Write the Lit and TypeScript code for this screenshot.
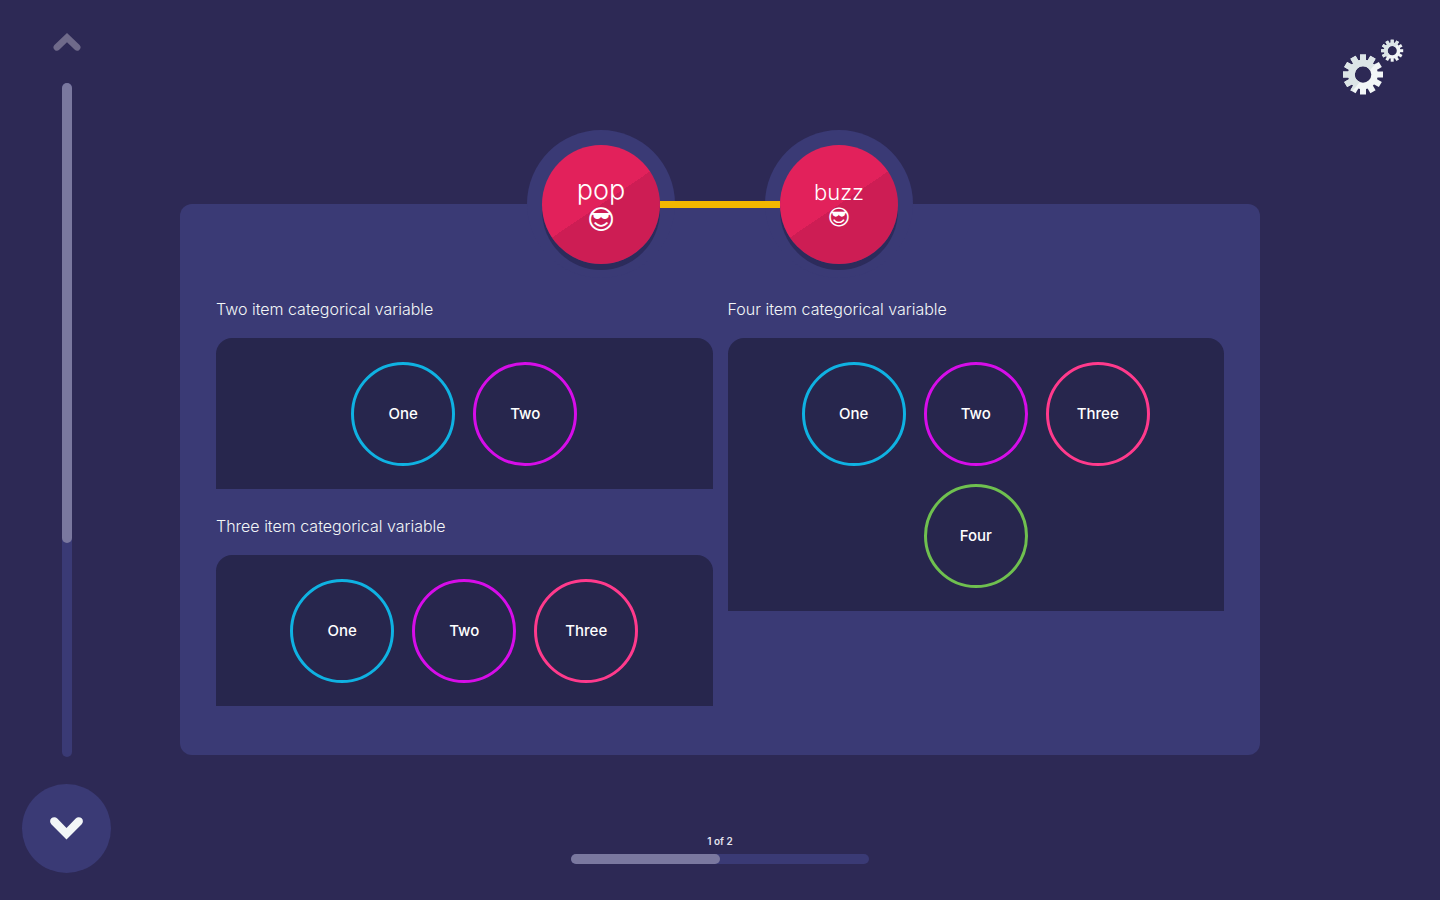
import { LitElement, html, css, svg } from "lit";
import { customElement, property, state } from "lit/decorators.js";

interface Person { name: string; size: string; }
interface Variable { id: string; label: string; options: string[]; }

const PEOPLE: Person[] = [
  { name: "pop", size: "large" },
  { name: "buzz", size: "medium" },
];

const LEFT: Variable[] = [
  { id: "two", label: "Two item categorical variable", options: ["One", "Two"] },
  { id: "three", label: "Three item categorical variable", options: ["One", "Two", "Three"] },
];

const RIGHT: Variable[] = [
  { id: "four", label: "Four item categorical variable", options: ["One", "Two", "Three", "Four"] },
];

const gear = (cx: number, cy: number, r: number, tooth: number, hole: number) => {
  const body = r * 0.74;
  const teeth = Array.from({ length: 12 }, (_, i) => i * 30);
  return svg`
    <path fill-rule="evenodd" d="M${cx - body} ${cy}a${body} ${body} 0 1 0 ${2 * body} 0a${body} ${body} 0 1 0 ${-2 * body} 0z
      M${cx - hole} ${cy}a${hole} ${hole} 0 1 1 ${2 * hole} 0a${hole} ${hole} 0 1 1 ${-2 * hole} 0z"/>
    ${teeth.map((a) => svg`<path transform="rotate(${a} ${cx} ${cy})"
      d="M${cx - tooth / 2} ${cy - r}h${tooth}v${r * 0.32}h${-tooth}z"/>`)}`;
};

@customElement("category-bin")
export class CategoryBin extends LitElement {
  @property({ attribute: false }) variable!: Variable;

  static styles = css`
    :host { display: block; }
    .group { margin: 0; padding: 0; border: 0; min-width: 0; }
    .title {
      display: block; padding: 0; margin-bottom: 20px;
      font-size: 16px; line-height: 18px; font-weight: 300; color: #f2f6f7;
    }
    .options {
      display: flex; flex-wrap: wrap; justify-content: center; gap: 18px;
      padding: 24px 60px 23px; border-radius: 16px 16px 0 0; background: #27264d;
    }
    .option {
      box-sizing: border-box; width: 104px; height: 104px; border-radius: 50%;
      border: 3px solid var(--ring); display: grid; place-items: center;
      font-size: 15px; line-height: 20px; font-weight: 500; color: #fff; cursor: pointer;
    }
    .option:has(.box:checked) { background: var(--ring); }
    .option:has(.box:focus-visible) { outline: 2px solid #fff; outline-offset: 2px; }
    .box { appearance: none; position: absolute; margin: 0; width: 1px; height: 1px; opacity: 0; }
    .c0 { --ring: #0fb2e2; }
    .c1 { --ring: #d60de9; }
    .c2 { --ring: #ff3a8c; }
    .c3 { --ring: #6fc04f; }
  `;

  render() {
    const v = this.variable;
    return html`<fieldset class="group">
      <legend class="title">${v.label}</legend>
      <div class="options">
        ${v.options.map((o, i) => html`<label class="option c${i}">
          <input class="box" type="checkbox" name=${v.id} value=${o} /><span>${o}</span>
        </label>`)}
      </div>
    </fieldset>`;
  }
}

@customElement("app-root")
export class AppRoot extends LitElement {
  @state() private progress = 460 / 674;

  static styles = css`
    :host {
      display: grid; grid-template-columns: 1fr 6fr 1fr; box-sizing: border-box;
      min-height: 100vh; background: #2d2955; color: #fff;
      font-family: Inter, "Open Sans", sans-serif;
    }
    button { padding: 0; border: 0; background: none; cursor: pointer; }
    svg { display: block; }
    .rail {
      box-sizing: border-box; width: 133px; padding: 33px 0 27px;
      display: flex; flex-direction: column; align-items: center;
    }
    .up { margin-bottom: 32px; }
    .track { flex: 1; width: 10px; border-radius: 5px; background: #3a3a75; }
    .fill { border-radius: 5px; background: #7a789f; }
    .down {
      width: 89px; height: 89px; margin-top: 27px; border-radius: 50%;
      background: #3a3a75; display: grid; place-items: center;
    }
    .stage { display: flex; flex-direction: column; padding: 130px 0 36px; }
    .people {
      position: relative; display: flex; justify-content: center; gap: 90px;
      margin-bottom: -74px;
    }
    .halo {
      position: relative; box-sizing: border-box; width: 148px; height: 148px; padding: 15px;
      border-radius: 50%; background: #3a3a75;
    }
    .halo + .halo::before {
      content: ""; position: absolute; right: 133px; top: 71px;
      width: 120px; height: 7px; background: #f2b700;
    }
    .person {
      width: 118px; height: 119px; border-radius: 50%;
      background: linear-gradient(146deg, #e2215b 50%, #cd1d54 50%);
      box-shadow: 0 6px 0 #2c2b5b;
      display: flex; flex-direction: column; align-items: center; justify-content: center;
      font-weight: 300; text-align: center;
    }
    .large { font-size: 27px; line-height: 30px; }
    .medium { font-size: 22px; line-height: 26px; }
    .face { font-family: "DejaVu Sans", sans-serif; font-weight: 400; }
    .panel {
      display: grid; grid-template-columns: 1fr 1fr; gap: 15px; align-items: start;
      padding: 96px 36px 49px; border-radius: 12px; background: #3a3a75;
    }
    .column { display: grid; gap: 28px; }
    .pager {
      margin-top: auto; display: flex; flex-direction: column; align-items: center; gap: 7px;
      font-size: 10px; line-height: 12px; font-weight: 600; color: #e4e4ee;
    }
    .meter { width: 298px; height: 10px; border-radius: 5px; background: #3a3a75; }
    .done { width: 50%; height: 100%; border-radius: 5px; background: #7a789f; }
    .corner { display: flex; justify-content: flex-end; align-items: flex-start; padding: 39px 36px 0 0; }
  `;

  render() {
    return html`
      <nav class="rail" aria-label="Stages">
        <button class="up" aria-label="Previous">
          <svg width="28" height="18" viewBox="0 0 28 18" fill="#6f6a8a">
            <path d="M14 0 L26.6 12 A3.4 3.4 0 0 1 21.8 16.8 L14 9.2 L6.2 16.8 A3.4 3.4 0 0 1 1.4 12Z"/>
          </svg>
        </button>
        <div class="track"><div class="fill" style="height:${this.progress * 100}%"></div></div>
        <button class="down" aria-label="Next">
          <svg width="33" height="23" viewBox="0 0 33 23" fill="#f2f6f7">
            <path d="M16.5 22.5 L1.3 7.3 A4.2 4.2 0 0 1 7.3 1.4 L16.5 11 L25.7 1.4 A4.2 4.2 0 0 1 31.7 7.3Z"/>
          </svg>
        </button>
      </nav>
      <main class="stage">
        <div class="people">
          ${PEOPLE.map((p) => html`<div class="halo"><div class="person ${p.size}">
            <span>${p.name}</span><span class="face">😎&#xFE0E;</span>
          </div></div>`)}
        </div>
        <form class="panel">
          <div class="column">${LEFT.map((v) => html`<category-bin .variable=${v}></category-bin>`)}</div>
          <div class="column">${RIGHT.map((v) => html`<category-bin .variable=${v}></category-bin>`)}</div>
        </form>
        <div class="pager">
          <span>1 of 2</span>
          <div class="meter" role="progressbar" aria-label="Prompt" aria-valuemin="0" aria-valuemax="2" aria-valuenow="1">
            <div class="done"></div>
          </div>
        </div>
      </main>
      <div class="corner">
        <button aria-label="Settings">
          <svg width="62" height="57" viewBox="0 0 62 57">
            <defs>
              <clipPath id="shade-big"><path d="M0 10H46L6 57H0Z"/></clipPath>
              <clipPath id="shade-small"><path d="M38 0H60L40 24H38Z"/></clipPath>
            </defs>
            <g fill="#f2f6f7">${gear(21, 35.5, 20, 6, 8.3)}${gear(50.2, 11.7, 11, 3, 4.6)}</g>
            <g fill="#dce5e7">
              <g clip-path="url(#shade-big)">${gear(21, 35.5, 20, 6, 8.3)}</g>
              <g clip-path="url(#shade-small)">${gear(50.2, 11.7, 11, 3, 4.6)}</g>
            </g>
          </svg>
        </button>
      </div>`;
  }
}
